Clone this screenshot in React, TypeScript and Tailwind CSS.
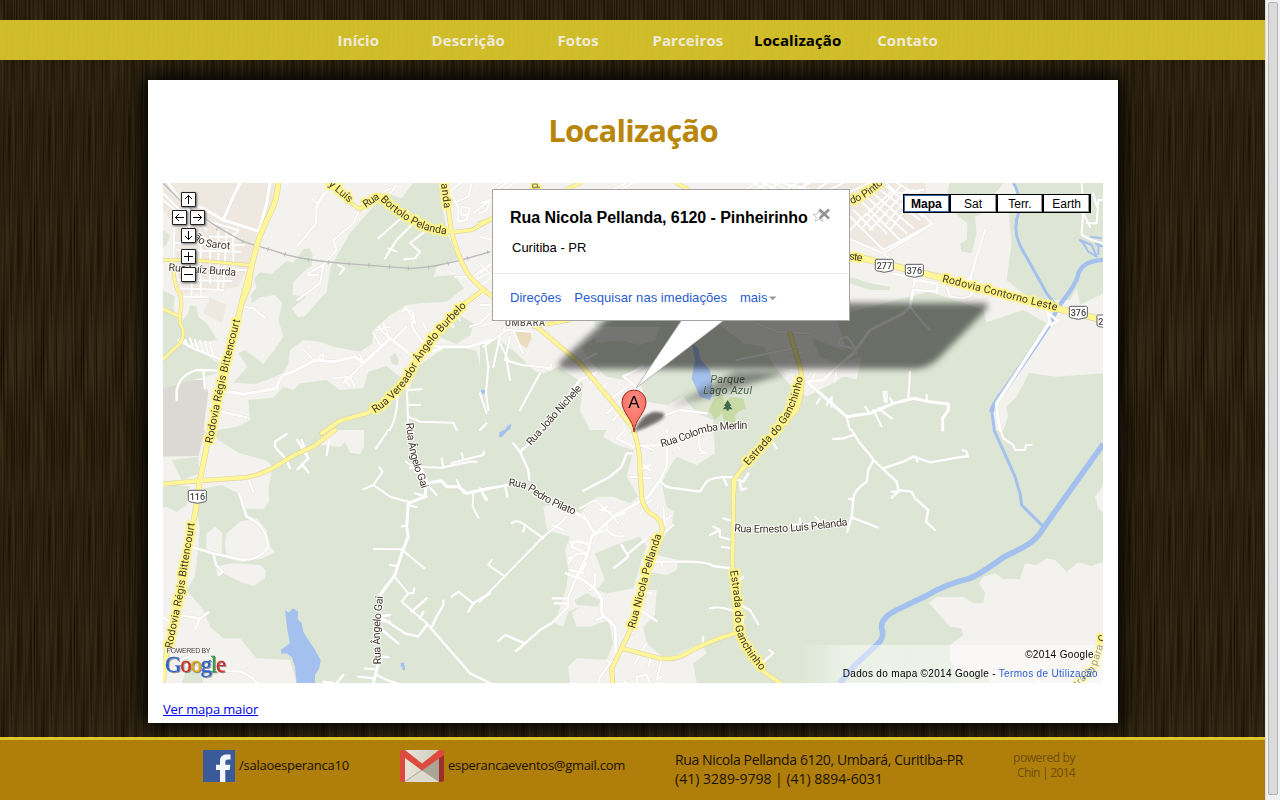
import React from "react";

type TileName = "a" | "b" | "c" | "d" | "e" | "f";

// The map is surveyed in six sheets, each drawn at three units per pixel.
const sheetOrigin: Record<TileName, [number, number]> = {
  a: [160, 180],
  b: [160, 430],
  c: [480, 180],
  d: [480, 430],
  e: [790, 180],
  f: [790, 430],
};

const sheetTransform = (t: TileName) =>
  `translate(${sheetOrigin[t][0]} ${sheetOrigin[t][1]}) scale(0.33333)`;

const LIGHT = "#f3f2ee";
const GREEN = "#dde6d5";
const URBAN = "#eee8e1";
const WATER = "#a3c0ee";

const areas: [TileName, string, string][] = [
  // north-west
  ["a", LIGHT, "M9 9H1110V750H9Z"],
  ["a", URBAN, "M9 9H350L335 80L290 160L270 250L235 320L60 345L40 130L9 90Z"],
  ["a", URBAN, "M150 353L200 375L186 430L130 400Z"],
  ["a", "#dcd8d4", "M9 625L90 600L130 600L145 640L130 750H9Z"],
  ["a", GREEN, "M275 370L272 345L290 325L282 295L300 277L335 282L380 243L400 248L430 208L448 205L458 225L455 258L440 268L400 305L398 345L440 350L395 385L415 412L435 408L500 335L512 260L570 160L640 80L680 40L725 55L760 9H838L850 100L862 160L895 235L830 262L820 290L880 285L912 325L860 365L780 370L740 375L690 405L640 450L637 490L600 515L520 500L480 485L430 480L390 510L385 550L370 580L320 600L285 612L220 608L262 560L235 520L255 510L310 552L350 500L370 470L355 420L367 370L345 345L300 352Z"],
  ["a", GREEN, "M265 660L340 653L370 620L400 630L420 610L500 600L540 630L610 625L625 575L680 558L730 600L740 650L770 560L830 520L870 495L950 512L960 560L1000 620V750H175L230 740L270 720Z"],
  ["a", GREEN, "M835 460L850 425L880 395L940 430L932 465L890 492L835 470ZM690 530L705 518L718 540L710 558L695 550Z"],
  ["a", GREEN, "M9 330L45 350L40 385L60 430L85 400L90 375L110 380L115 410L140 430L172 480L120 485L90 490L160 540L182 550L170 580L100 600L30 620L9 625ZM9 150L30 165L20 195L9 200Z"],
  // south-west
  ["b", LIGHT, "M155 0L175 30L235 68L320 92L338 110L325 180L328 215L310 238L250 235L235 190L185 165L120 178L110 235L120 300L105 440L80 480L130 540L150 590L190 625L240 625L290 685L390 690L410 759H9V232L75 230L90 170L30 160L9 180V80L115 78L130 0Z"],
  ["b", GREEN, "M9 170L85 180L80 225L50 245L9 225ZM35 90L115 80L118 130L65 150ZM60 680L120 700L130 759H65L80 720Z"],
  ["b", LIGHT, "M455 65L480 45L540 50L556 35L570 68L600 72L612 50V0H505ZM200 310L240 275L290 265L320 300L325 345L345 365L310 385L240 395L200 385L195 340ZM140 310L165 290L187 310L185 370L165 375L138 355ZM170 410L215 400L300 405L318 420L315 445L280 468L240 455L190 430L170 435Z"],
  ["b", "#dcd8d4", "M9 0H135L115 78H9Z"],
  ["b", WATER, "M375 540L385 548L400 535L415 545L413 568L425 580L430 605L445 630L462 655L482 690L478 715L465 735V759H410L405 710L395 680L378 670L365 672L362 660L390 640L382 600ZM722 698h10v12h-10zM728 706h7v14h-8z"],
  // centre
  ["c", GREEN, "M0 420H990V750H0Z"],
  ["c", LIGHT, "M0 9H990V420H0Z"],
  ["c", LIGHT, "M0 420H340L360 465L305 500L335 550L380 590L430 600L480 560L515 555L480 610L500 665L560 675L610 650L650 700L700 720V750H330L300 690L310 610L235 560L190 580L110 565L30 560L0 600ZM330 440H540L525 480L480 495L420 480L350 490Z"],
  ["c", GREEN, "M0 490L50 475L110 520L160 570L200 590L225 640L190 690L140 660L90 600L60 650L0 720Z"],
  ["c", LIGHT, "M700 420H990V600L930 615L885 560L850 500L790 490Z"],
  ["c", WATER, "M635 490L655 505L662 540L690 570L700 640L690 660L660 650L635 595L645 540ZM80 740L95 730L90 750H75Z"],
  ["c", "#c8dba7", "M700 660L725 640L735 665L752 650L790 655L798 685L775 695L765 705L765 735H735L725 700L705 720L685 690Z"],
  ["c", "#eadcbd", "M108 455L150 450L155 475L140 505L118 490Z"],
  ["d", LIGHT, "M380 0H700L705 70L650 105L590 80L570 110L545 160L560 230L582 245L575 290L545 330L510 370L595 390L590 420L560 435L500 425L490 480L530 480L525 555L490 590L500 640L560 690L615 660L665 640L680 670L640 700L650 759H270L265 710L290 685L380 690L400 640L385 570L330 590L290 590L275 550L300 530L265 545L250 590L225 580L260 470L265 420L255 360L270 320L200 300L190 230L240 215L300 250L350 200L400 200L450 220L475 200L440 140L460 60L410 45L370 20Z"],
  ["d", GREEN, "M345 370L420 340L480 320L500 350L485 390L460 475L380 490L350 480L375 450ZM285 510L320 490L360 510L355 530L290 525Z"],
  ["d", WATER, "M57 8L70 0H85L65 22H58Z"],
  // north-east
  ["e", LIGHT, "M0 9H670L690 70L655 90L665 190L650 300L710 330L780 360H840L870 310L900 330L940 310V580L800 590L715 580L690 640L650 680L660 750H612L600 690L680 590L770 430L700 390L580 430L520 410L430 460L380 500L310 500L230 560L200 600L160 590L110 620L50 650L0 600Z"],
  ["e", URBAN, "M0 9H405L420 130L300 210L200 190L0 140Z"],
  ["e", GREEN, "M478 9H640L600 60L595 90L555 110L560 160L545 220L515 215L510 190L530 180L532 130L495 100L470 50ZM685 9H900L915 35H940V340L870 375L860 320L780 355L735 370L650 300L665 190L665 90L690 60Z"],
  ["e", GREEN, "M180 290L240 310L300 320V330H240L180 310ZM60 460L170 400L320 360L420 335L580 390L590 430L700 400L770 430L600 690L612 750H0V620L50 650L170 590L200 600L215 530L140 550L90 530ZM690 630L720 580L760 585L790 605L860 615L940 660V750H640L660 690Z"],
  ["e", LIGHT, "M0 420H140L170 510L130 500L60 470L0 500Z"],
  // south-east
  ["f", LIGHT, "M940 165L915 200L925 235L940 250ZM417 520L440 500L480 502L520 500L550 520L580 520L585 490L567 460L580 440L615 430L640 447H690L705 400L740 405L770 385L795 390L830 425L865 397L905 408L940 395V759H600L580 720L500 730L480 690V645L520 615L515 595L480 590Z"],
];

const rivers: [TileName, number, string][] = [
  ["e", 9, "M670 9Q688 35 689 90Q665 145 692 200L770 340L805 385"],
  ["e", 13, "M940 240Q880 242 865 280Q862 310 805 380L780 430"],
  ["e", 15, "M790 415L720 520L640 635Q605 680 605 695"],
  ["e", 9, "M605 690L613 750"],
  ["f", 9, "M612 0L655 95L675 140L690 190L695 225L720 250L760 290"],
  ["f", 17, "M940 42L790 252L760 295Q740 330 700 352L640 382Q560 440 530 448Q470 462 410 497L320 540Q270 565 275 595Q284 620 265 640L195 705L150 759"],
  ["e", 6, "M870 180L905 195L920 230L895 215L880 190ZM900 170L935 175M915 190L940 200M925 180V225"],
  ["a", 8, "M963 633h8v9"],
];

const whiteRoads: [TileName, number, string][] = [
  ["a", 8, "M25 9L60 60L130 85L190 120L300 155M240 9L215 60L190 120M330 9L320 70L295 160"],
  ["a", 5, "M9 60L45 90L95 150L160 190M45 90L40 240M9 40L60 90L110 95M50 110L95 60M60 60L140 150M95 230V345M122 190L122 350M150 210V310M175 155V330M200 150L190 320M220 160V290M50 210L240 215M45 190L250 195M60 265L260 270M50 300L215 303M50 325L190 330M70 350L145 352M110 115L235 150L220 170L150 170"],
  ["a", 5, "M510 25L470 70L455 55M470 70L468 130L415 195M490 40L470 85M600 85L580 130L520 180L530 210L490 255L445 280M490 255L480 310L412 360M475 285L445 285M535 255L553 265L540 282M690 25L655 45M710 15L675 60M745 95L655 175M770 120L710 180L675 235M685 205L710 215M800 150L750 190L780 215L765 235L733 238"],
  ["a", 5, "M900 9L870 35L895 80V125L920 120L930 85L905 80L903 105H920M935 9L925 50L880 70M990 60L940 100M985 255L940 290H885M985 280L945 300M940 360L990 330M990 375L960 375M990 400L960 430L930 440"],
  ["a", 5, "M245 380L280 385L315 413M55 480L110 510L190 540M75 480L85 500M90 475L100 505M105 480L115 510M120 482L130 515M135 485L145 520M150 490L160 525"],
  ["a", 6, "M50 660Q42 590 110 570L190 572M130 570L135 625M160 690L260 712"],
  ["a", 8, "M190 632L250 643L350 625Q355 600 370 585L400 575L465 540L520 545L585 530L610 550L690 475L735 510L760 530L795 525L850 500L930 500L990 480"],
  ["a", 5, "M432 510L465 545M478 540L480 525H490V540M610 550L550 610M520 595L575 590M555 600L570 620M570 590L585 620M600 525L610 550M640 460L660 495M655 440L690 480M670 430L690 480M650 450L690 440M740 440L700 480M735 380L760 400L765 430L740 385L725 395M760 400L755 440L790 490L840 500M790 430L800 450M740 600L745 750M745 630L785 628M745 675L780 675M745 710L780 725L880 728L890 750M712 640Q715 700 690 750M875 380L900 420M860 410L880 440"],
  ["a", 5, "M975 490L985 560L978 640L985 690"],
  ["b", 6, "M380 12L345 35V50L380 90L390 115M412 30L445 85L412 118L428 105L445 127M425 30L440 70M495 15L507 30L500 75M265 148L280 185"],
  ["b", 6, "M237 190L260 260Q320 285 325 350Q300 390 250 390L160 370L100 352M160 370L168 405L188 425L177 435M60 555L120 565L145 547M120 565L105 598M60 700L130 720L240 725Q270 735 292 759M9 560L60 600M60 690L90 678"],
  ["b", 5, "M685 0L648 55M738 95L760 110L850 113M750 115L770 110M610 178L640 165L668 125L658 112M640 165L690 200L745 215"],
  ["b", 8, "M760 70L800 150L795 200L745 220L740 290L745 320L725 370L705 435L660 495M655 700L640 759M800 160L845 152L860 170H895L920 190L990 175"],
  ["b", 5, "M745 225L770 232M765 190L800 200M795 150L808 170L830 195M725 290L740 285M642 357L725 358L793 415M690 405L710 408M703 440L745 490L760 490L763 475M745 490L725 515L800 580M845 85L850 112L930 95H950M890 150L900 170L912 190M905 70L910 90M875 100L930 85L970 75L972 65M940 190L938 230L955 263M970 190L982 210"],
  ["b", 6, "M800 580L930 730L990 759M755 545L800 505M780 565L790 545M815 590L830 560L850 525V512M800 585L775 620L735 610L660 560L690 555M660 595L715 640M640 570L690 575M670 680L685 682M615 715L645 718M595 740L640 745M875 500L895 485L940 520L990 490M940 520L925 545M650 735L680 750L710 759M530 759L550 735M490 755L520 759"],
  ["c", 5, "M0 100L20 90L30 60L0 70M0 170L37 180M0 250L37 290L0 320M0 280L37 250M0 440L60 420M10 500L80 450L160 455M55 480L85 540M90 470L75 540L125 555L215 565M60 470L40 560M80 540L90 600M215 550L210 570L190 560M70 450L90 420M100 455L130 520"],
  ["c", 5, "M30 30L60 9M50 30L80 9M70 30L100 9M400 28L440 9M420 28L460 9M800 28L830 9M820 9L860 28M850 9L890 28M880 9L920 28M910 9L950 28M830 28L860 9M870 28L900 9M920 28L950 9M960 28L980 9"],
  ["c", 6, "M330 610L350 575L300 600L240 680M380 700L470 620L430 590L490 560M390 660L455 610M360 640L380 610M350 600L390 650M400 720L465 650M470 620L500 580M270 520L300 560M350 520L310 540M480 745L570 700L600 690L680 700"],
  ["c", 5, "M770 540L960 500M830 430L890 455L990 460M0 640L20 700M120 690L180 580M0 750L20 730"],
  ["d", 6, "M100 40L120 65L145 120L148 150M120 65L160 30M0 180L85 165M0 175L18 210M75 165L82 200M455 70H440L425 110L390 140L310 182M440 40L460 50L540 45M435 0L410 25L460 50M520 60L480 45"],
  ["d", 6, "M560 0L560 110L540 150Q550 175 590 175L660 185L680 155Q700 138 760 142M730 142L740 165M760 145L790 155L805 130M780 160L785 180L798 175M450 140L510 145M480 120L510 105M490 105L510 120"],
  ["d", 8, "M540 150L505 200L400 260L345 312L335 320L320 380L290 440Q350 470 365 510V550L405 590L408 670M290 250L320 270L345 312"],
  ["d", 5, "M345 210L400 260L435 250M345 210L300 235M385 230L360 240L395 245M345 312L380 300Q400 325 432 318M380 300V285M310 250L325 280M400 260L415 280M485 230L515 210M495 240L480 250M550 230L555 290M545 280L575 255M550 310L580 285M0 515L190 320L240 280L260 260M95 280Q110 265 135 285L190 325M135 285L130 305M25 405L75 440M25 405L35 390M215 285L250 300M320 340L270 335M290 370L265 400M275 390L265 385L300 370L320 375"],
  ["d", 6, "M325 345Q280 320 275 350L320 370M258 430L295 445M270 420L310 430M290 440L265 500L265 530L215 580L180 600L135 640L75 615L55 633M135 640L108 663M265 505H218M260 520H225M300 430L320 400M345 435V465L330 480M370 560L350 570M425 345L445 380L403 413M500 325L445 370M525 395H620Q680 395 700 408L755 415M545 395V410M480 540L530 573M495 485L515 490M440 600L460 610"],
  ["d", 5, "M400 690L360 740L355 759M380 690L395 705M500 640L465 700M515 670L505 710M545 690L530 750L550 735M440 760L430 750M470 759V740L500 735L510 759M690 535Q740 525 790 560L785 600M780 525L810 540L835 583M670 620L668 640M780 450L790 440M850 695L880 670L868 660M730 265L755 272M700 290L720 300L690 315M720 300V320L755 330M725 350L755 355M870 745L850 720M655 20L660 60L680 70L655 70M590 45L600 60M880 40L890 55"],
  ["e", 5, "M150 165L280 220L400 150L425 130L390 95M180 110L280 210L430 130M180 150L230 100L290 160M190 90L250 150M210 60L330 180M230 50L350 160M250 40L370 145M270 30L390 120M290 20L400 110M310 30L200 130M330 20L220 140M350 30L240 150M370 30L290 130M390 30L300 150M290 10L320 40L400 30M420 70L300 30M320 9L410 60M0 15L60 28M20 28L60 9M80 28L110 9M120 28L160 9M170 40L240 9"],
  ["e", 6, "M280 220L310 250L430 280L540 300L560 230L585 150M370 320L375 300L440 310V340M370 330L445 335M470 320L480 350L520 355L545 345V300M310 280L430 310M770 395L800 420"],
  ["e", 5, "M875 9L880 80L875 165L905 180L940 190M880 100L900 140M910 40L920 80M890 130H920L925 60H940"],
  ["e", 8, "M770 390L780 425L620 670L622 700L630 750M805 420L785 435"],
  ["e", 8, "M370 330L360 380L340 400L240 450L190 520L130 570L100 600L50 605L170 710L240 700L310 670L370 655L420 665L475 672V690L458 715V750"],
  ["e", 5, "M360 380L400 430L420 450M145 480L170 470L190 495L200 520M145 480L150 495L185 505M140 570L135 605M355 655L360 575M285 665L280 635L290 635V665M240 700L225 680M250 690L275 740M265 685L305 715M125 680V650L110 675M90 655L80 670M170 710L180 750M310 670L300 655M412 665L410 645M65 600L75 580M0 520H40M0 540L35 545M0 570L45 575"],
  ["f", 6, "M185 0L210 40L240 75L250 90L235 120L230 155Q190 180 190 210L185 260L172 305M250 90L320 155L325 180L365 185L375 205L415 240L408 275L435 300M280 115L340 95L370 80L420 97L520 80H533L530 65L518 60M185 262L263 292M190 15L160 25L130 27M378 80L382 95M325 185L305 203M325 185L305 185M178 207H190"],
  ["f", 5, "M632 0L640 25L670 45L675 60H705L708 45H725M30 280V265M75 260L90 275M0 285L170 275M560 725L620 750M700 710L750 759M780 690L800 720"],
];

const yellowRoads: [TileName, number, string][] = [
  ["a", 8, "M9 240L100 240L265 255M38 240L42 290L50 325Q72 355 60 400V430Q80 460 60 490L9 538M9 387L55 408"],
  ["a", 9, "M505 9L560 60L600 88L625 65L660 45L720 90L800 140L875 157L935 150L990 120L1000 118"],
  ["a", 11, "M850 9L865 90L875 157Q900 250 930 290L970 330L1130 440L1260 550L1360 670L1420 745"],
  ["a", 11, "M485 760L540 722L620 700Q700 650 740 580Q790 510 800 490Q850 420 915 370L970 330"],
  ["b", 11, "M525 0L460 50Q400 75 370 95Q300 140 250 143L120 152L9 162"],
  ["a", 14, "M355 9Q350 60 335 90Q300 160 290 200L255 330L235 410L190 600L150 750L120 900L105 1000L60 1230L20 1420L9 1500M275 255L265 320L245 370"],
  ["c", 9, "M160 440L270 420M0 320L37 350M0 130L37 115M155 28L160 9M260 28L300 9M590 9L625 28"],
  ["d", 11, "M460 0Q480 50 480 120L485 200Q490 240 520 255Q560 280 540 320L500 440L460 580L425 655L395 715L398 759"],
  ["d", 11, "M425 655L540 685Q590 690 620 670Q680 635 765 610"],
  ["e", 11, "M0 460L30 560Q45 620 20 690L-50 765L-130 850L-165 895L-170 950"],
  ["d", 10, "M760 150V260L757 420L770 600Q790 670 850 725L900 759"],
  ["e", 17, "M160 220L440 290L800 385L940 420"],
];

type RoadLabel = {
  id: string;
  tile: TileName;
  d: string;
  text: string;
  halo: "y" | "w";
  len: number;
};

const roadLabels: RoadLabel[] = [
  { id: "luis", tile: "a", d: "M505 15L590 88", text: "y Luís", halo: "y", len: 82 },
  { id: "bort1", tile: "a", d: "M617 84L680 42", text: "Rua", halo: "y", len: 52 },
  { id: "bort2", tile: "a", d: "M660 60Q710 110 780 144Q820 160 900 168", text: "Bortolo Pelanda", halo: "y", len: 228 },
  { id: "landa", tile: "a", d: "M842 2L858 130", text: "landa", halo: "y", len: 84 },
  { id: "ver", tile: "a", d: "M645 700Q720 650 765 570Q815 475 940 360", text: "Rua Vereador Ângelo Burbelo", halo: "y", len: 426 },
  { id: "sarot", tile: "a", d: "M78 145Q110 195 150 202L250 212", text: "João Sarot", halo: "w", len: 155 },
  { id: "burda", tile: "a", d: "M25 272L260 290", text: "Rua Luíz Burda", halo: "w", len: 203 },
  { id: "bit1", tile: "a", d: "M157 791L192 615L250 380", text: "Rodovia Régis Bittencourt", halo: "y", len: 380 },
  { id: "bit2", tile: "b", d: "M36 656L68 500L112 230", text: "Rodovia Régis Bittencourt", halo: "y", len: 382 },
  { id: "gai1", tile: "b", d: "M738 -20L745 40Q755 100 780 160L795 210", text: "Rua Ângelo Gai", halo: "w", len: 203 },
  { id: "gai2", tile: "b", d: "M663 703L659 600L672 470", text: "Rua Ângelo Gai", halo: "w", len: 204 },
  { id: "nich", tile: "c", d: "M153 798L240 700L325 605", text: "Rua João Nichele", halo: "w", len: 230 },
  { id: "gan1", tile: "c", d: "M805 858L895 757Q960 680 973 560", text: "Estrada do Ganchinho", halo: "y", len: 318 },
  { id: "colo", tile: "d", d: "M545 52Q620 30 660 12Q710 -5 840 -4", text: "Rua Colomba Merlin", halo: "w", len: 266 },
  { id: "pila", tile: "d", d: "M85 168Q130 168 160 192Q210 230 310 264", text: "Rua Pedro Pilato", halo: "w", len: 218 },
  { id: "pell", tile: "d", d: "M464 596L482 530L512 415L560 270", text: "Rua Nicola Pellanda", halo: "y", len: 292 },
  { id: "gan2", tile: "d", d: "M750 423Q768 520 766 590Q780 660 860 740", text: "Estrada do Ganchinho", halo: "y", len: 323 },
  { id: "erne", tile: "d", d: "M762 304Q900 318 1130 281", text: "Rua Ernesto Luís Pelanda", halo: "w", len: 343 },
  { id: "ste", tile: "e", d: "M176 238L240 248", text: "ste", halo: "y", len: 40 },
  { id: "pint", tile: "e", d: "M184 72Q240 55 300 -10", text: "do Pinto", halo: "y", len: 115 },
  { id: "cont", tile: "e", d: "M455 305L840 402", text: "Rodovia Contorno Leste", halo: "y", len: 355 },
  { id: "para", tile: "f", d: "M850 785L915 722L960 590", text: "strada para C", halo: "y", len: 200 },
];

const shields: [TileName, number, number, string][] = [
  ["b", 112, 200, "116"],
  ["e", 283, 257, "277"],
  ["e", 373, 272, "376"],
  ["e", 865, 398, "376"],
  ["e", 948, 424, "277"],
];

// A coloured outline grown round whatever the filtered group draws.
function HaloFilter({ id, color, radius }: { id: string; color: string; radius: number }) {
  return (
    <filter id={id} filterUnits="userSpaceOnUse" x="163" y="183" width="940" height="500" colorInterpolationFilters="sRGB">
      <feMorphology in="SourceAlpha" operator="dilate" radius={radius} result="grown" />
      <feGaussianBlur in="grown" stdDeviation="0.5" result="soft" />
      <feFlood floodColor={color} />
      <feComposite in2="soft" operator="in" result="halo" />
      <feMerge>
        <feMergeNode in="halo" />
        <feMergeNode in="SourceGraphic" />
      </feMerge>
    </filter>
  );
}

function RoadLabels({ halo }: { halo: "y" | "w" }) {
  return (
    <g filter={halo === "y" ? "url(#haloYellow)" : "url(#haloWhite)"} fill="#41362e" fontSize="32">
      {roadLabels
        .filter((l) => l.halo === halo)
        .map((l) => (
          <g key={l.id} transform={sheetTransform(l.tile)}>
            <path id={`road-${l.id}`} d={l.d} fill="none" />
            <text textLength={l.len}>
              <textPath href={`#road-${l.id}`} textLength={l.len}>
                {l.text}
              </textPath>
            </text>
          </g>
        ))}
    </g>
  );
}

function MapCanvas() {
  return (
    <svg viewBox="163 183 940 500" className="block h-[500px] w-[940px]" aria-hidden="true">
      <defs>
        <HaloFilter id="haloYellow" color="#fff580" radius={2} />
        <HaloFilter id="haloWhite" color="#ffffff" radius={1} />
        <filter id="softShadow" x="-20%" y="-40%" width="140%" height="180%">
          <feGaussianBlur stdDeviation="3.2" />
        </filter>
        <filter id="pinShadow" x="-50%" y="-50%" width="200%" height="200%">
          <feGaussianBlur stdDeviation="1.4" />
        </filter>
        <linearGradient id="tailFade" x1="0" x2="1" y1="1" y2="0">
          <stop offset="0" stopColor="#000" stopOpacity="0.2" />
          <stop offset="1" stopColor="#000" stopOpacity="0.5" />
        </linearGradient>
        <linearGradient id="legalFade" x1="0" x2="1">
          <stop offset="0" stopColor="#fff" stopOpacity="0" />
          <stop offset="0.17" stopColor="#fff" stopOpacity="0.48" />
          <stop offset="1" stopColor="#fff" stopOpacity="0.5" />
        </linearGradient>
        <radialGradient id="pinFill" cx="0.5" cy="0.3" r="0.7">
          <stop offset="0" stopColor="#ff8f83" />
          <stop offset="1" stopColor="#f5665a" />
        </radialGradient>
      </defs>
      <rect x="163" y="183" width="940" height="500" fill={GREEN} />
      {areas.map(([t, fill, d], i) => (
        <path key={i} d={d} fill={fill} transform={sheetTransform(t)} />
      ))}
      <g fill="none" stroke={WATER} strokeLinejoin="round">
        {rivers.map(([t, w, d], i) => (
          <path key={i} d={d} strokeWidth={w} transform={sheetTransform(t)} />
        ))}
      </g>
      <g fill="none" strokeLinejoin="round" strokeLinecap="round">
        {whiteRoads.map(([t, w, d], i) => (
          <path key={i} d={d} stroke="#e4dfd8" strokeWidth={w + 3} transform={sheetTransform(t)} />
        ))}
        {whiteRoads.map(([t, w, d], i) => (
          <path key={i} d={d} stroke="#ffffff" strokeWidth={w + 1} transform={sheetTransform(t)} />
        ))}
        <g transform={sheetTransform("a")} stroke="#b9b9b9">
          <path d="M9 9L60 60Q130 120 250 185L350 215Q420 240 550 250L750 265Q830 265 990 215" strokeWidth="4" />
          <path d="M100 90l-6 9M175 140l-5 10M250 180l-4 10M326 203l-3 10M376 218l-2 10M445 235v10M505 242v10M567 247v10M627 251v10M689 255v11M745 260v10M806 258v10M863 246l2 10M922 230l2 10M982 212l2 10" strokeWidth="3" />
        </g>
        {yellowRoads.map(([t, w, d], i) => (
          <path key={i} d={d} stroke="#e2d5a4" strokeWidth={w + 4} transform={sheetTransform(t)} />
        ))}
        {yellowRoads.map(([t, w, d], i) => (
          <path key={i} d={d} stroke="#fff697" strokeWidth={w} transform={sheetTransform(t)} />
        ))}
      </g>
      <g fontFamily="Roboto, sans-serif">
        <RoadLabels halo="w" />
        <RoadLabels halo="y" />
        {shields.map(([t, x, y, n], i) => (
          <g key={i} transform={`${sheetTransform(t)} translate(${x} ${y})`}>
            <path
              d="M-27 -17Q-26 -19 -22 -19H22Q26 -19 27 -17V12Q25 16 14 17L0 20L-14 17Q-25 16 -27 12Z"
              fill="#fff"
              stroke="#5d5d66"
              strokeWidth="3"
            />
            <text textAnchor="middle" y="10" fontSize="27" fontWeight="500" fill="#444">
              {n}
            </text>
          </g>
        ))}
        <g transform={sheetTransform("c")} fill="#5b5650" stroke="#fff" strokeWidth="6" paintOrder="stroke">
          <text x="75" y="438" fontSize="27" fontWeight="500" textLength="120">UMBARÁ</text>
          <g fill="#4c6350" stroke="#e6eddc" strokeWidth="2" fontStyle="italic" fontSize="33" textAnchor="middle">
            <text x="743" y="608" textLength="104">Parque</text>
            <text x="743" y="643" textLength="146">Lago Azul</text>
          </g>
          <path d="M743 660L754 678H749L758 688H746V692H740V688H728L737 678H732Z" fill="#3e6a4b" stroke="none" />
          <text transform="translate(157 9) rotate(90)" fontSize="30" stroke="#fff585" strokeWidth="10">de</text>
        </g>
      </g>
      {/* shadows thrown by the info window, its tail and the pin */}
      <path d="M634 303H984Q992 304 982 314L942 355Q930 369 914 369H566Q552 368 564 358L612 314Q620 303 634 303Z" fill="#000" fillOpacity="0.52" filter="url(#softShadow)" />
      <path d="M668 407L735 372H788L700 400Z" fill="url(#tailFade)" filter="url(#softShadow)" />
      <path d="M634 432Q640 416 653 412Q668 411 663 418Q656 424 634 432Z" fill="#000" fillOpacity="0.55" filter="url(#pinShadow)" />
      <path d="M682 319.500L636 388L725 319.500" fill="#fff" stroke="#9b9b9b" strokeWidth="0.7" />
      <path d="M634 432C633 419 622 413 622 402A12 12 0 0 1 646 402C646 413 635 419 634 432Z" fill="url(#pinFill)" stroke="#9c2a22" strokeWidth="1" />
      <text x="634" y="408" fontFamily="Liberation Sans, sans-serif" fontSize="17" textAnchor="middle" fill="#000">A</text>
      <rect x="798" y="645" width="305" height="38" fill="url(#legalFade)" />
      <text x="166.500" y="653" fontFamily="Liberation Sans, sans-serif" fontSize="7" fill="#444" stroke="#f3f2ee" strokeWidth="1.200" paintOrder="stroke" textLength="44">POWERED BY</text>
      <text
        x="165"
        y="672"
        fontFamily="Liberation Serif, serif"
        fontSize="22.500"
        textLength="61"
        strokeWidth="0.3"
        className="[filter:drop-shadow(1px_1px_0.5px_rgba(0,0,0,0.4))]"
      >
        <tspan fill="#2a62d0" stroke="#2a62d0">G</tspan>
        <tspan fill="#cf2f2b" stroke="#cf2f2b">o</tspan>
        <tspan fill="#e2a91d" stroke="#e2a91d">o</tspan>
        <tspan fill="#2a62d0" stroke="#2a62d0">g</tspan>
        <tspan fill="#2f9e44" stroke="#2f9e44">l</tspan>
        <tspan fill="#cf2f2b" stroke="#cf2f2b">e</tspan>
      </text>
    </svg>
  );
}

const arrowShapes = {
  up: "M7.500 12V3.500M4 7L7.500 3.500L11 7",
  down: "M7.500 3V11.500M4 8L7.500 11.500L11 8",
  left: "M12 7.500H3.500M7 4L3.500 7.500L7 11",
  right: "M3 7.500H11.500M8 4L11.500 7.500L8 11",
  plus: "M3 7.500H12M7.500 3V12",
  minus: "M3 7.500H12",
};

function PanButton({ kind }: { kind: keyof typeof arrowShapes }) {
  return (
    <button className="block size-[15px] bg-white shadow-[1px_1px_2px_#666]">
      <svg viewBox="0 0 15 15" className="block size-[15px]">
        <path d="M0.500 0.500H14.500V14.500H0.500Z" fill="#fff" stroke="#222" />
        <path d={arrowShapes[kind]} fill="none" stroke="#000" />
      </svg>
    </button>
  );
}

function MapControls() {
  return (
    <div className="absolute left-[9px] top-[9px] flex w-[33px] flex-col items-center">
      <PanButton kind="up" />
      <div className="mt-[3px] flex gap-[3px]">
        <PanButton kind="left" />
        <PanButton kind="right" />
      </div>
      <div className="mt-[3px]"><PanButton kind="down" /></div>
      <div className="mt-[6px]"><PanButton kind="plus" /></div>
      <div className="mt-[3px]"><PanButton kind="minus" /></div>
    </div>
  );
}

function MapTypes() {
  return (
    <div className="absolute left-[740px] top-[11px] flex h-[19px] w-[188px] gap-[2px] bg-black px-[2px] py-px text-center text-[12px] leading-[18px] text-black">
      <div className="-ml-px flex-1 border border-[#3a62a8] bg-white font-bold leading-[16px]">Mapa</div>
      {["Sat", "Terr.", "Earth"].map((t) => (
        <div key={t} className="flex-1 border-b border-r border-[#999] bg-white pl-px">{t}</div>
      ))}
    </div>
  );
}

function InfoWindow() {
  return (
    <div className="absolute left-[329px] top-[6px] h-[132px] w-[358px] border border-[#a5a5a5] bg-white text-[13px] text-black">
      <div className="flex h-[84px] flex-col border-b border-[#ebebe6] pl-[17px] pt-[18px]">
        <div className="flex items-center">
          <h2 className="w-[300px] whitespace-nowrap text-[16px] font-bold leading-5 tracking-[-0.05px]">
            Rua Nicola Pellanda, 6120 - Pinheirinho
          </h2>
          <svg viewBox="0 0 20 16" className="-mt-[7px] ml-[2px] h-4 w-5">
            <path d="M7 3L8.700 7.200L13 7.400L9.600 10.200L10.800 14.500L7 12L3.200 14.500L4.400 10.200L1 7.400L5.300 7.200Z" fill="#fff" stroke="#bbb" strokeWidth="0.800" />
            <path d="M7.500 2.500L17 11.500M17 2.500L7.500 11.500" stroke="#949494" strokeWidth="2.500" />
          </svg>
        </div>
        <p className="mt-[10px] pl-[2px] leading-5">Curitiba - PR</p>
      </div>
      <div className="flex items-center gap-[13px] pl-[17px] pt-[14px] leading-5 text-[#2a5bd0]">
        <span>Direções</span>
        <span className="tracking-[0.04px]">Pesquisar nas imediações</span>
        <span className="flex items-center">
          mais
          <svg viewBox="0 0 8 5" className="ml-[2px] h-[5px] w-2"><path d="M0 0.500H7.500L3.700 4.300Z" fill="#999" /></svg>
        </span>
      </div>
    </div>
  );
}

// One 40px plank of vertical grain, repeated across the page.
function WoodTexture() {
  return (
    <svg className="absolute left-0 top-0 h-[800px] w-[1265px]" aria-hidden="true">
      <defs>
        <filter id="grain" x="0" y="0" width="100%" height="100%" colorInterpolationFilters="sRGB">
          <feTurbulence type="fractalNoise" baseFrequency="0.55 0.009" numOctaves="2" seed="8" stitchTiles="stitch" />
          <feColorMatrix values="0.21 0 0 0 0.062  0.185 0 0 0 0.035  0.14 0 0 0 -0.012  0 0 0 0 1" />
        </filter>
        <pattern id="planks" width="40" height="400" patternUnits="userSpaceOnUse">
          <rect width="40" height="400" filter="url(#grain)" />
        </pattern>
      </defs>
      <rect width="1265" height="800" fill="url(#planks)" />
    </svg>
  );
}

function FacebookLogo() {
  return (
    <svg viewBox="0 0 32 32" className="block size-8">
      <path d="M0 0H32V32H0Z" fill="#3b5a99" />
      <path d="M17 32V20H13V14.700H17V11C17 6.800 19.500 4.600 23.500 4.600H27.500V9.600H25C23 9.600 22.300 10.500 22.300 12V14.700H27.300L26.700 20H22.300V32Z" fill="#f5f7fb" />
    </svg>
  );
}

function MailLogo() {
  return (
    <svg viewBox="0 0 44 32" className="block h-8 w-11">
      <defs>
        <linearGradient id="paper" x1="0" x2="1">
          <stop offset="0" stopColor="#e9e5d8" />
          <stop offset="1" stopColor="#cfccbd" />
        </linearGradient>
      </defs>
      <path d="M3 0H41Q44 0 44 3V29Q44 32 41 32H3Q0 32 0 29V3Q0 0 3 0Z" fill="#d9463b" />
      <path d="M5 0H39V32H5Z" fill="url(#paper)" />
      <path d="M22 20L39 8V32Z" fill="#a9a698" />
      <path d="M5 32L22 20L39 32Z" fill="#dedbce" />
      <path d="M5 31.500L22 20L39 31.500" fill="none" stroke="#aaa799" />
      <path d="M39 8L44 4V29Q44 32 41 32H39Z" fill="#9c2f29" />
      <path d="M0 3Q0 0 3 0H5L22 13.500L39 0H41Q44 0 44 3V5L22 20.500L5 8V32H3Q0 32 0 29Z" fill="#dd4a3e" />
    </svg>
  );
}

const navItems = ["Início", "Descrição", "Fotos", "Parceiros", "Localização", "Contato"];

export default function App() {
  return (
    <div className="relative flex h-[800px] w-[1280px] overflow-hidden bg-[#2b200f] font-['Open_Sans','Noto_Sans',sans-serif]">
      <WoodTexture />
      <div className="relative flex h-[800px] w-[1265px] flex-col">
        <nav className="relative z-10 mt-5 flex h-10 items-center justify-center bg-[#e0cc2c]/91">
          <ul className="flex w-[660px] pl-px text-center text-[15px] font-bold leading-[42px] tracking-[0.1px]">
            {navItems.map((item) => (
              <li key={item} className={item === "Localização" ? "w-[110px] text-black" : "w-[110px] text-[#eeeadb]"}>
                {item}
              </li>
            ))}
          </ul>
        </nav>
        <main className="ml-[148px] mt-5 flex h-[643px] w-[970px] flex-col bg-white px-[15px] shadow-[0_0_20px_4px_#000]">
          <h1 className="flex h-[103px] items-center justify-center pb-[3px] text-[31px] font-bold tracking-[-0.75px] text-[#b8860b]">
            Localização
          </h1>
          <div className="relative h-[500px] w-[940px] overflow-hidden font-['Liberation_Sans',Arial,sans-serif]">
            <MapCanvas />
            <MapControls />
            <MapTypes />
            <InfoWindow />
            <div className="absolute bottom-0 right-[5px] flex flex-col items-end text-[10px] leading-[19px] text-black">
              <span className="pr-[4px] tracking-[0.35px]">©2014 Google</span>
              <span className="tracking-[0.32px]">
                Dados do mapa ©2014 Google - <span className="text-[#2a5bd0]">Termos de Utilização</span>
              </span>
            </div>
          </div>
          <a href="#mapa" className="mt-[16px] self-start text-[13px] leading-5 tracking-[-0.15px] text-[#0000ee] underline">
            Ver mapa maior
          </a>
        </main>
        <footer className="relative mt-[14px] flex h-[63px] border-t-[3px] border-[#dcc62c] bg-[#b07e0b] text-[13px] text-[#1a1303]">
          <div className="ml-[203px] mt-[10px] flex h-8 w-[197px] items-center gap-1">
            <FacebookLogo />
            <span className="tracking-[-0.25px]">/salaoesperanca10</span>
          </div>
          <div className="mt-[10px] flex h-8 w-[275px] items-center gap-1">
            <MailLogo />
            <span className="tracking-[-0.29px]">esperancaeventos@gmail.com</span>
          </div>
          <address className="mt-[10px] w-[300px] whitespace-nowrap text-[14px] not-italic leading-[19px]">
            <span className="tracking-[-0.38px]">Rua Nicola Pellanda 6120, Umbará, Curitiba-PR</span>
            <br />
            (41) 3289-9798 | (41) 8894-6031
          </address>
          <p className="mt-[10px] w-[100px] text-right text-[12px] leading-[15px] text-[#6e4e08]">
            <span className="tracking-[-0.4px]">powered by</span>
            <br />
            <span className="tracking-[-0.7px]">Chin | 2014</span>
          </p>
        </footer>
      </div>
      <div className="relative flex h-[800px] w-[15px] justify-center border-l border-[#dcdcdc] bg-[#f1f1f1] pt-[2px]">
        <div className="h-[793px] w-[10px] rounded-[2px] border border-[#b5b5b5] bg-[#dadada]" />
      </div>
    </div>
  );
}
